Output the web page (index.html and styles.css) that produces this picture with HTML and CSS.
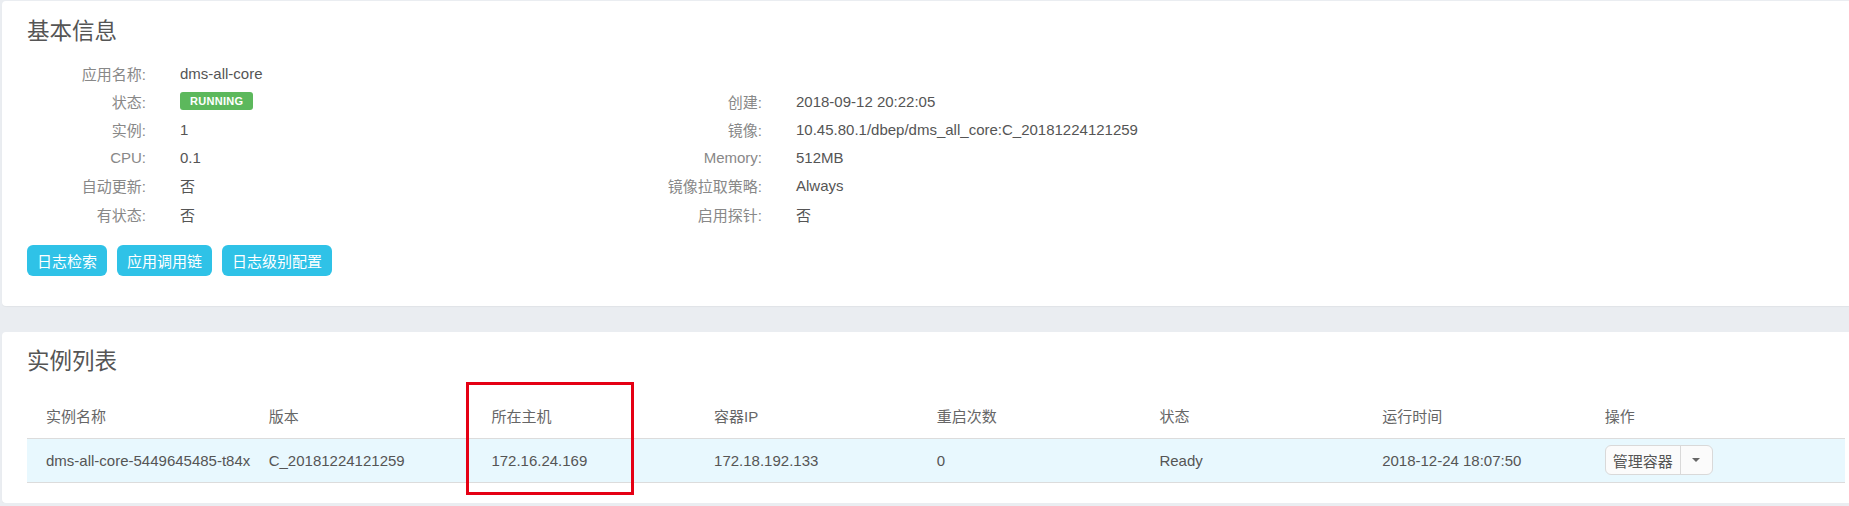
FILE: index.html
```html
<!DOCTYPE html>
<html lang="zh-CN">
<head>
<meta charset="utf-8">
<title>应用详情</title>
<link rel="stylesheet" href="styles.css">
</head>
<body>
<div class="page">
  <section class="card card-info">
    <h2 class="card-title">基本信息</h2>
    <div class="info-grid">
      <div class="info-item"><span class="info-label">应用名称:</span><span class="info-value">dms-all-core</span></div>
      <div class="info-item"></div>
      <div class="info-item"><span class="info-label">状态:</span><span class="info-value"><span class="badge">RUNNING</span></span></div>
      <div class="info-item"><span class="info-label">创建:</span><span class="info-value">2018-09-12 20:22:05</span></div>
      <div class="info-item"><span class="info-label">实例:</span><span class="info-value">1</span></div>
      <div class="info-item"><span class="info-label">镜像:</span><span class="info-value">10.45.80.1/dbep/dms_all_core:C_20181224121259</span></div>
      <div class="info-item"><span class="info-label">CPU:</span><span class="info-value">0.1</span></div>
      <div class="info-item"><span class="info-label">Memory:</span><span class="info-value">512MB</span></div>
      <div class="info-item"><span class="info-label">自动更新:</span><span class="info-value">否</span></div>
      <div class="info-item"><span class="info-label">镜像拉取策略:</span><span class="info-value">Always</span></div>
      <div class="info-item"><span class="info-label">有状态:</span><span class="info-value">否</span></div>
      <div class="info-item"><span class="info-label">启用探针:</span><span class="info-value">否</span></div>
    </div>
    <div class="actions">
      <button class="btn-info">日志检索</button>
      <button class="btn-info">应用调用链</button>
      <button class="btn-info">日志级别配置</button>
    </div>
  </section>

  <section class="card card-list">
    <h2 class="card-title">实例列表</h2>
    <table class="tbl">
      <thead>
        <tr>
          <th class="col">实例名称</th>
          <th class="col">版本</th>
          <th class="col">所在主机</th>
          <th class="col">容器IP</th>
          <th class="col">重启次数</th>
          <th class="col">状态</th>
          <th class="col">运行时间</th>
          <th class="col-op">操作</th>
        </tr>
      </thead>
      <tbody>
        <tr>
          <td>dms-all-core-5449645485-t84x</td>
          <td>C_20181224121259</td>
          <td>172.16.24.169</td>
          <td>172.18.192.133</td>
          <td>0</td>
          <td>Ready</td>
          <td>2018-12-24 18:07:50</td>
          <td>
            <div class="btn-group">
              <span class="btn-main">管理容器</span><span class="btn-caret"><span class="caret"></span></span>
            </div>
          </td>
        </tr>
      </tbody>
    </table>
    <div class="highlight"></div>
  </section>
</div>
</body>
</html>
```

FILE: styles.css
```css
* { box-sizing: border-box; }
html, body { margin: 0; padding: 0; }
body {
  background: #eaedf1;
  font-family: "Liberation Sans", "Noto Sans CJK SC", sans-serif;
  font-size: 15px;
  color: #555;
  overflow: hidden;
}
.page {
  padding: 1px 0 0 2px;
}
.card {
  background: #fff;
  border-radius: 4px 0 0 4px;
  box-shadow: 0 1px 1px rgba(0,0,0,0.04);
}
.card-info {
  padding: 19px 4px 30px 25px;
}
.card-list {
  position: relative;
  margin-top: 26px;
  padding: 18px 4px 20px 25px;
}
.card-title {
  margin: 0;
  font-size: 22.5px;
  line-height: 24px;
  font-weight: normal;
  color: #555;
}
.info-grid {
  margin-top: 15px;
  display: grid;
  grid-template-columns: 616px 1fr;
  grid-auto-rows: 28.2px;
}
.info-item {
  display: flex;
  align-items: center;
}
.info-label {
  width: 119px;
  text-align: right;
  color: #888;
  flex-shrink: 0;
}
.info-value {
  padding-left: 34px;
  color: #555;
  display: flex;
  align-items: center;
}
.badge {
  display: inline-block;
  background: #5cb85c;
  color: #fff;
  font-weight: bold;
  font-size: 11px;
  line-height: 18px;
  height: 18px;
  padding: 0 10px;
  border-radius: 3px;
  letter-spacing: 0.3px;
}
.actions {
  margin-top: 17px;
  display: flex;
  gap: 10px;
}
.btn-info {
  font-family: inherit;
  font-size: 15px;
  height: 31px;
  padding: 0 10px;
  border: none;
  border-radius: 6px;
  background: #2fc2e7;
  color: #fff;
  cursor: pointer;
}
.tbl {
  margin-top: 20px;
  width: 100%;
  border-collapse: collapse;
  table-layout: fixed;
}
.tbl th {
  text-align: left;
  font-weight: normal;
  color: #666;
  height: 44px;
  padding: 0 19px;
  border-bottom: 1px solid #dcdcdc;
  vertical-align: middle;
}
.tbl th.col { width: 222.7px; }
.tbl td {
  height: 44px;
  padding: 0 19px;
  background: #e8f8fe;
  border-bottom: 1px solid #dcdcdc;
  vertical-align: middle;
  white-space: nowrap;
  color: #555;
}
.btn-group {
  display: inline-flex;
  height: 30px;
  border: 1px solid #d9d9d9;
  border-radius: 6px;
  background: #fbfbfb;
  vertical-align: middle;
}
.btn-main {
  display: flex;
  align-items: center;
  padding: 0 7px;
  color: #555;
  border-right: 1px solid #d9d9d9;
}
.btn-caret {
  display: flex;
  align-items: center;
  justify-content: center;
  width: 31px;
}
.caret {
  width: 0;
  height: 0;
  border-left: 4px solid transparent;
  border-right: 4px solid transparent;
  border-top: 4px solid #666;
}
.highlight {
  position: absolute;
  left: 464px;
  top: 50px;
  width: 168px;
  height: 113px;
  border: 3px solid #e50014;
  pointer-events: none;
}
```
